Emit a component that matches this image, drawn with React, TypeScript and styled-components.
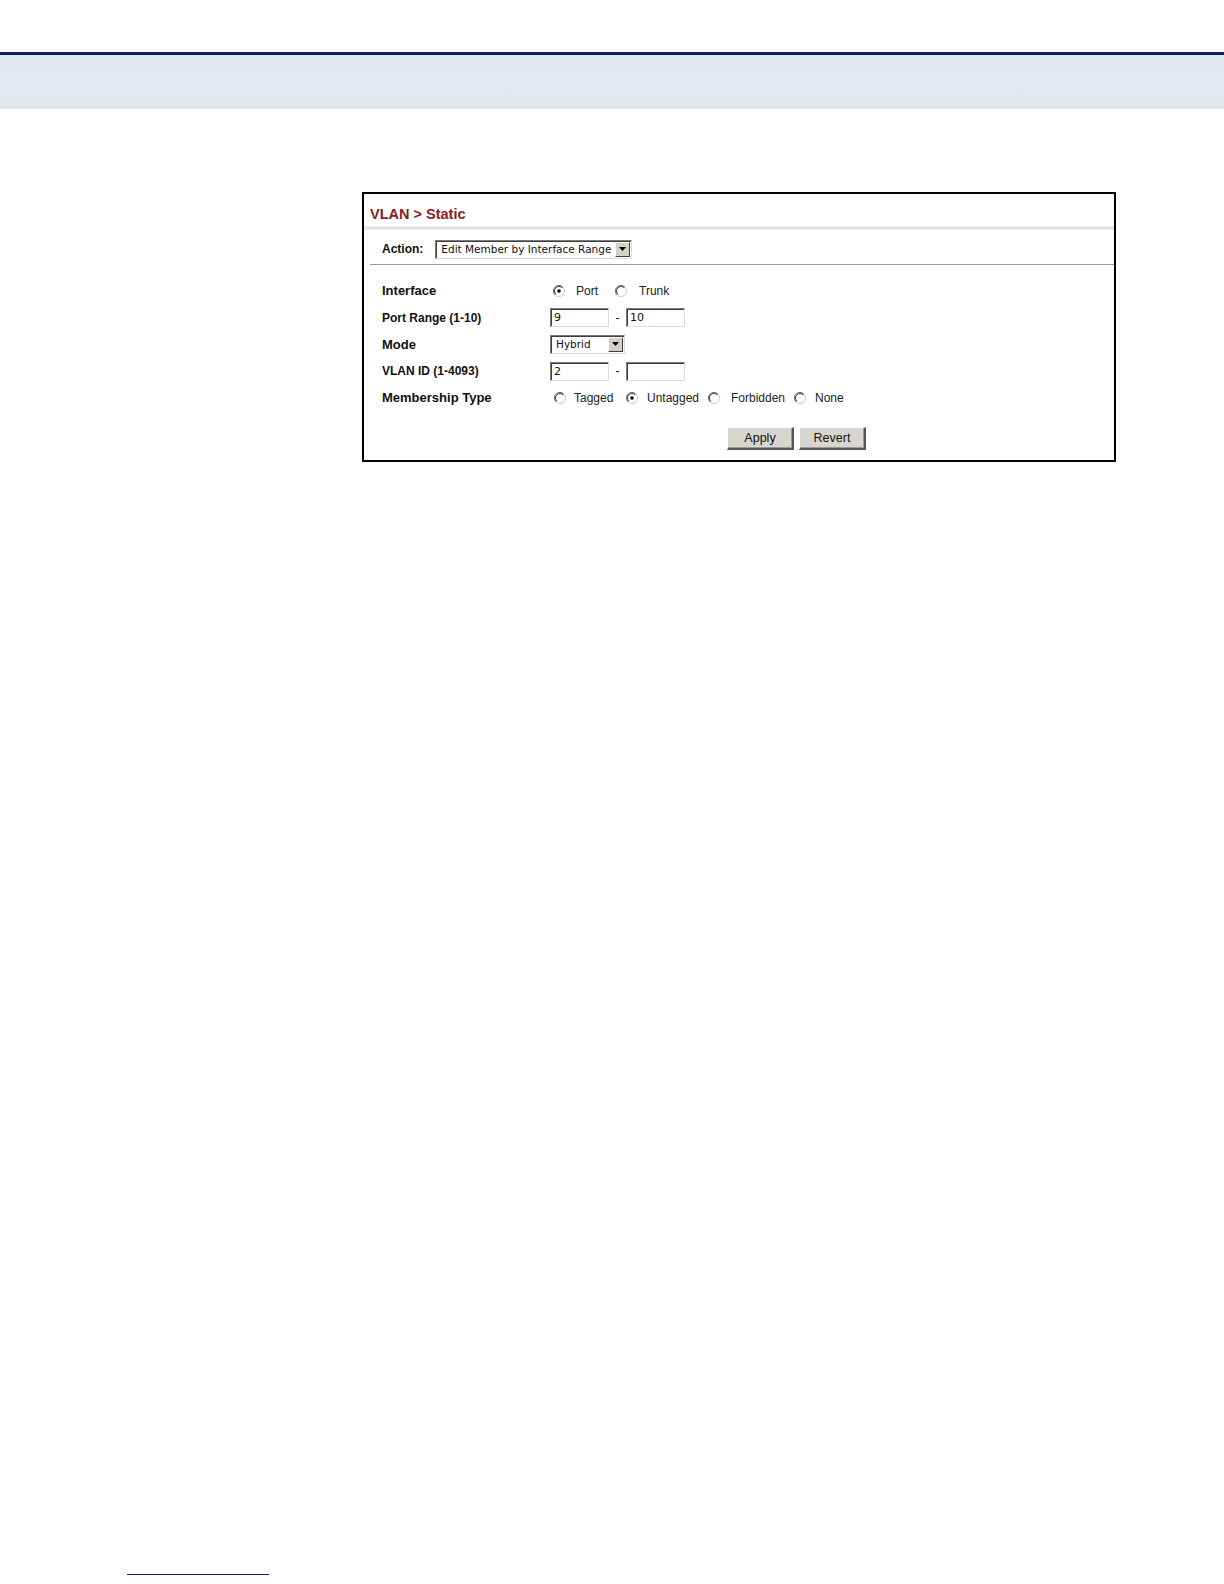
import React from 'react';
import styled, { createGlobalStyle } from 'styled-components';

const GlobalStyle = createGlobalStyle`
    html, body {
        margin: 0;
        padding: 0;
        background: #ffffff;
    }
    #root {
        min-height: 1584px;
    }
`;

const Page = styled.div`
    position: relative;
    width: 1224px;
    min-height: 1584px;
    background: #ffffff;
    font-family: 'Liberation Sans', Arial, sans-serif;
    padding-top: 52px;
    box-sizing: border-box;
`;

const HeaderBand = styled.div`
    height: 54px;
    border-top: 3px solid #0d2461;
    background: linear-gradient(180deg, #e3e7f0 0%, #e4e8ef 70%, #e3e6e8 100%);
`;

const Content = styled.div`
    padding: 83px 0 0 362px;
`;

const Panel = styled.div`
    width: 754px;
    height: 270px;
    border: 2px solid #000000;
    box-sizing: border-box;
    background: #ffffff;
    display: flex;
    flex-direction: column;
`;

const TitleBar = styled.div`
    height: 31px;
    padding: 8px 0 0 6px;
    box-sizing: border-box;
    display: flex;
    align-items: center;
    color: #8a1c1c;
    font-weight: 700;
    font-size: 14.5px;
`;

const TitleRule = styled.div`
    height: 6px;
    background: linear-gradient(180deg, #ffffff 0%, #e0e0e0 45%, #e6e6e6 60%, #ffffff 100%);
`;

const ActionRow = styled.div`
    height: 34px;
    margin-left: 6px;
    padding: 3px 0 0 12px;
    display: flex;
    align-items: center;
    gap: 12px;
    border-bottom: 1px solid #9a9a9a;
    box-sizing: border-box;
`;

const ActionLabel = styled.span`
    font-weight: 700;
    font-size: 12px;
    color: #111111;
`;

const SelectBox = styled.div<{ $width: number; $height: number }>`
    width: ${(p) => p.$width}px;
    height: ${(p) => p.$height}px;
    box-sizing: border-box;
    display: flex;
    align-items: center;
    border-top: 1px solid #7a7a7a;
    border-left: 1px solid #7a7a7a;
    border-right: 1px solid #dcdcdc;
    border-bottom: 1px solid #dcdcdc;
    box-shadow: inset 1px 1px 0 #404040;
    background: #ffffff;
    font-family: 'DejaVu Sans', Tahoma, sans-serif;
    font-size: 10.5px;
    color: #111111;
`;

const SelectText = styled.span`
    flex: 1;
    padding-left: 5px;
    white-space: nowrap;
`;

const ArrowButton = styled.span`
    width: 15px;
    height: calc(100% - 2px);
    box-sizing: border-box;
    margin-right: 1px;
    background: #d4d0c8;
    border-top: 1px solid #ffffff;
    border-left: 1px solid #ffffff;
    border-right: 1px solid #404040;
    border-bottom: 1px solid #404040;
    display: flex;
    align-items: center;
    justify-content: center;
`;

const Form = styled.div`
    padding: 12.6px 0 0 18px;
    display: flex;
    flex-direction: column;
`;

const Row = styled.div`
    height: 26.75px;
    display: flex;
    align-items: center;
`;

const Label = styled.div<{ $size?: number }>`
    width: 168px;
    font-weight: 700;
    font-size: ${(p) => p.$size ?? 12}px;
    color: #111111;
`;

const Controls = styled.div`
    display: flex;
    align-items: center;
`;

const TextBox = styled.div`
    width: 59px;
    height: 19px;
    box-sizing: border-box;
    border-top: 1px solid #7a7a7a;
    border-left: 1px solid #7a7a7a;
    border-right: 1px solid #dcdcdc;
    border-bottom: 1px solid #dcdcdc;
    box-shadow: inset 1px 1px 0 #404040;
    background: #ffffff;
    font-family: 'DejaVu Sans', Tahoma, sans-serif;
    font-size: 11px;
    color: #111111;
    padding: 2px 0 0 3px;
    line-height: 14px;
`;

const Dash = styled.span`
    width: 17px;
    text-align: center;
    font-size: 12px;
    color: #111111;
`;

const RadioItem = styled.label<{ $width?: number }>`
    display: flex;
    align-items: center;
    width: ${(p) => (p.$width ? `${p.$width}px` : 'auto')};
    font-size: 12px;
    color: #222222;
`;

const RadioText = styled.span<{ $gap: number }>`
    margin-left: ${(p) => p.$gap}px;
`;

const ButtonRow = styled.div`
    display: flex;
    gap: 5px;
    padding: 16px 0 0 363px;
`;

const Button = styled.button`
    width: 67px;
    height: 23px;
    padding: 0;
    background: #d8d5ce;
    border-top: 1px solid #ffffff;
    border-left: 1px solid #ffffff;
    border-right: 2px solid #555555;
    border-bottom: 2px solid #555555;
    box-shadow: inset -1px -1px 0 #9a9a9a;
    font-family: 'Liberation Sans', Arial, sans-serif;
    font-size: 12.5px;
    color: #111111;
`;

const FootRule = styled.div`
    position: absolute;
    left: 127px;
    top: 1574px;
    width: 142px;
    height: 1px;
    background: #1a1a8c;
`;

const DownArrow = () => (
    <svg width="7" height="4" viewBox="0 0 7 4">
        <path d="M0 0 H7 L3.5 4 Z" fill="#000000" />
    </svg>
);

const Radio = ({ checked }: { checked?: boolean }) => (
    <svg width="12" height="12" viewBox="0 0 12 12">
        <circle cx="6" cy="6" r="5.5" fill="#ffffff" stroke="#c8c8c8" strokeWidth="1" />
        <path d="M9.9 2.1 A5.5 5.5 0 0 0 2.1 9.9" stroke="#6e6e6e" strokeWidth="1" fill="none" />
        <path d="M9.2 2.8 A4.5 4.5 0 0 0 2.8 9.2" stroke="#404040" strokeWidth="1" fill="none" />
        {checked && <circle cx="6" cy="6" r="1.8" fill="#000000" />}
    </svg>
);

const Select = ({ value, width, height }: { value: string; width: number; height: number }) => (
    <SelectBox $width={width} $height={height}>
        <SelectText>{value}</SelectText>
        <ArrowButton>
            <DownArrow />
        </ArrowButton>
    </SelectBox>
);

export default function App() {
    return (
        <>
            <GlobalStyle />
            <Page>
                <HeaderBand />
                <Content>
                    <Panel>
                        <TitleBar>VLAN &gt; Static</TitleBar>
                        <TitleRule />
                        <ActionRow>
                            <ActionLabel>Action:</ActionLabel>
                            <Select value="Edit Member by Interface Range" width={197} height={19} />
                        </ActionRow>
                        <Form>
                            <Row>
                                <Label $size={13}>Interface</Label>
                                <Controls style={{ paddingLeft: 3 }}>
                                    <RadioItem $width={62}>
                                        <Radio checked />
                                        <RadioText $gap={11}>Port</RadioText>
                                    </RadioItem>
                                    <RadioItem>
                                        <Radio />
                                        <RadioText $gap={12}>Trunk</RadioText>
                                    </RadioItem>
                                </Controls>
                            </Row>
                            <Row>
                                <Label>Port Range (1-10)</Label>
                                <Controls>
                                    <TextBox>9</TextBox>
                                    <Dash>-</Dash>
                                    <TextBox>10</TextBox>
                                </Controls>
                            </Row>
                            <Row>
                                <Label $size={13}>Mode</Label>
                                <Controls>
                                    <Select value="Hybrid" width={75} height={19} />
                                </Controls>
                            </Row>
                            <Row>
                                <Label>VLAN ID (1-4093)</Label>
                                <Controls>
                                    <TextBox>2</TextBox>
                                    <Dash>-</Dash>
                                    <TextBox />
                                </Controls>
                            </Row>
                            <Row>
                                <Label $size={13}>Membership Type</Label>
                                <Controls style={{ paddingLeft: 4 }}>
                                    <RadioItem $width={72}>
                                        <Radio />
                                        <RadioText $gap={8}>Tagged</RadioText>
                                    </RadioItem>
                                    <RadioItem $width={82}>
                                        <Radio checked />
                                        <RadioText $gap={9}>Untagged</RadioText>
                                    </RadioItem>
                                    <RadioItem $width={86}>
                                        <Radio />
                                        <RadioText $gap={11}>Forbidden</RadioText>
                                    </RadioItem>
                                    <RadioItem>
                                        <Radio />
                                        <RadioText $gap={9}>None</RadioText>
                                    </RadioItem>
                                </Controls>
                            </Row>
                        </Form>
                        <ButtonRow>
                            <Button>Apply</Button>
                            <Button>Revert</Button>
                        </ButtonRow>
                    </Panel>
                </Content>
                <FootRule />
            </Page>
        </>
    );
}
